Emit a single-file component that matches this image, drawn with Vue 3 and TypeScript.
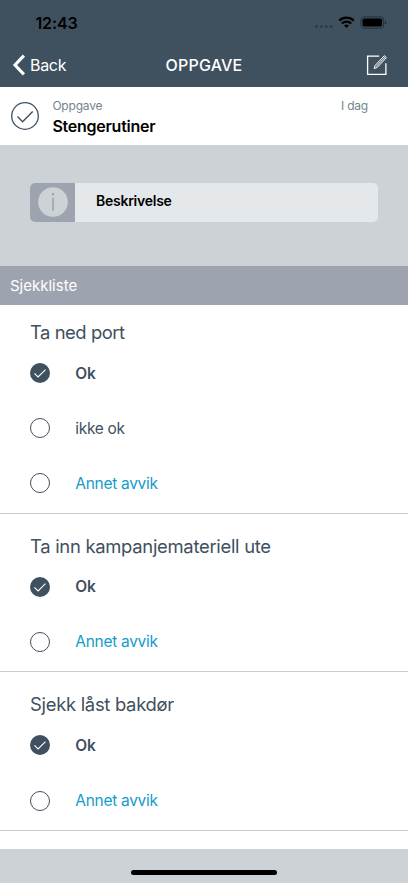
<script setup lang="ts">
type OptionKind = 'ok' | 'plain' | 'link'

interface Option {
  label: string
  kind: OptionKind
}

interface ChecklistItem {
  title: string
  options: Option[]
}

const items: ChecklistItem[] = [
  {
    title: 'Ta ned port',
    options: [
      { label: 'Ok', kind: 'ok' },
      { label: 'ikke ok', kind: 'plain' },
      { label: 'Annet avvik', kind: 'link' },
    ],
  },
  {
    title: 'Ta inn kampanjemateriell ute',
    options: [
      { label: 'Ok', kind: 'ok' },
      { label: 'Annet avvik', kind: 'link' },
    ],
  },
  {
    title: 'Sjekk låst bakdør',
    options: [
      { label: 'Ok', kind: 'ok' },
      { label: 'Annet avvik', kind: 'link' },
    ],
  },
]
</script>

<template>
  <div class="screen">
    <header class="top">
      <div class="status">
        <span class="clock">12:43</span>
        <svg class="signals" width="76" height="16" viewBox="0 0 76 16">
          <g fill="#2a3945">
            <circle cx="4.5" cy="11.7" r="1.4" />
            <circle cx="9.4" cy="11.7" r="1.4" />
            <circle cx="14.3" cy="11.7" r="1.4" />
            <circle cx="19.2" cy="11.7" r="1.4" />
          </g>
          <g fill="none" stroke="#000" stroke-width="2.2">
            <path d="M27.2 5.6 A10.6 10.6 0 0 1 41.8 5.6" />
            <path d="M29.8 8.5 A6.8 6.8 0 0 1 39.2 8.5" />
          </g>
          <path d="M32 10.6 A3.7 3.7 0 0 1 37 10.6 L34.5 13.1 Z" fill="#000" />
          <rect x="48.9" y="1.9" width="22.8" height="11.3" rx="3.2" fill="none" stroke="#1f2b34" stroke-width="0.9" />
          <rect x="50.5" y="3.5" width="19.6" height="8.1" rx="1.8" fill="#000" />
          <path d="M73 5.7 C74.6 6.4 74.6 8.7 73 9.4 Z" fill="#1f2b34" />
        </svg>
      </div>
      <div class="nav">
        <div class="back">
          <svg width="14" height="22" viewBox="0 0 14 22">
            <path d="M11.9 1.6 L3 11 L11.9 20.4" fill="none" stroke="#fff" stroke-width="3.1" />
          </svg>
          <span class="back-label">Back</span>
        </div>
        <h1 class="nav-title">OPPGAVE</h1>
        <svg class="edit" width="22" height="22" viewBox="0 0 22 22" fill="none" stroke="#fff">
          <path d="M13.2 2.1 H1.6 V20.4 H19.9 V9.2" stroke-width="1.3" />
          <path d="M8.2 14.6 L9.2 11.3 L18.3 1.7 L20.4 3.7 L11.4 13.3 Z M10 12.6 L19.3 2.8" stroke-width="1" stroke-linejoin="round" />
        </svg>
      </div>
    </header>

    <section class="task">
      <svg class="task-icon" width="30" height="30" viewBox="0 0 30 30" fill="none" stroke="#3f5060">
        <circle cx="15" cy="15" r="13.3" stroke-width="1.3" />
        <path d="M7.5 15.6 L12.6 20.7 L22.7 10.5" stroke-width="1.4" />
      </svg>
      <div class="task-text">
        <span class="task-kind">Oppgave</span>
        <span class="task-name">Stengerutiner</span>
      </div>
      <span class="task-date">I dag</span>
    </section>

    <section class="description">
      <div class="card">
        <div class="card-icon">
          <svg width="30" height="30" viewBox="0 0 30 30">
            <circle cx="15" cy="15" r="14.8" fill="#cdd2d6" />
            <circle cx="15" cy="7.2" r="1.2" fill="#9ea4af" />
            <rect x="14.2" y="10.7" width="1.6" height="13" fill="#9ea4af" />
          </svg>
        </div>
        <span class="card-label">Beskrivelse</span>
      </div>
    </section>

    <h2 class="list-header"><span>Sjekkliste</span></h2>

    <main class="list">
      <section v-for="item in items" :key="item.title" class="item">
        <h3 class="item-title"><span>{{ item.title }}</span></h3>
        <div v-for="option in item.options" :key="option.label" class="option">
          <svg class="radio" width="20" height="20" viewBox="0 0 20 20" fill="none">
            <template v-if="option.kind === 'ok'">
              <circle cx="10" cy="10" r="10" fill="#3f5060" />
              <path d="M4.4 10.4 L8.1 14 L15.5 6.6" stroke="#fff" stroke-width="1.1" />
            </template>
            <circle v-else cx="10" cy="10" r="9.5" stroke="#3f5060" stroke-width="1" />
          </svg>
          <span class="option-label" :class="option.kind">{{ option.label }}</span>
        </div>
      </section>
    </main>

    <footer class="bottom"><div class="home-bar"></div></footer>
  </div>
</template>

<style>
body {
  margin: 0;
}
</style>

<style scoped>
.screen {
  width: 408px;
  height: 883px;
  overflow: hidden;
  display: flex;
  flex-direction: column;
  background: #fff;
  color: #3f5060;
  font-family: Inter, "Liberation Sans", sans-serif;
}

svg {
  display: block;
  flex: none;
}

h1,
h2,
h3 {
  margin: 0;
  font-weight: 400;
}

.top {
  flex: none;
  height: 87px;
  background: #3f515f;
}

.status {
  height: 43.5px;
  display: flex;
  justify-content: space-between;
  padding: 0 20px 0 35.5px;
}

.clock {
  margin-top: 13px;
  line-height: 20px;
  font-size: 16px;
  font-weight: 600;
  letter-spacing: -0.15px;
  color: #000;
}

.signals {
  margin-top: 15px;
}

.nav {
  height: 43px;
  display: grid;
  grid-template-columns: 1fr auto 1fr;
  align-items: center;
  color: #fff;
}

.back {
  display: flex;
  align-items: center;
  gap: 4px;
  padding-left: 12px;
}

.back-label {
  font-size: 16px;
  letter-spacing: -0.3px;
}

.nav-title {
  font-size: 16px;
  font-weight: 500;
  letter-spacing: 0.2px;
}

.edit {
  justify-self: end;
  margin-right: 20px;
}

.task {
  flex: none;
  height: 58.4px;
  display: flex;
  padding: 0 40px 0 10px;
}

.task-icon {
  margin-top: 13.6px;
}

.task-text {
  flex: 1;
  display: flex;
  flex-direction: column;
  padding: 11px 0 0 12.4px;
}

.task-kind,
.task-date {
  font-size: 12px;
  line-height: 16px;
  letter-spacing: -0.2px;
  color: #74848d;
}

.task-name {
  margin-top: 2px;
  font-size: 16px;
  line-height: 20px;
  font-weight: 600;
  letter-spacing: -0.25px;
  color: #000;
}

.task-date {
  margin-top: 11px;
}

.description {
  flex: none;
  height: 83.6px;
  padding: 37.3px 30px 0;
  background: #cdd2d6;
}

.card {
  height: 39px;
  display: flex;
  border-radius: 5px;
  overflow: hidden;
  background: #e4e8eb;
}

.card-icon {
  width: 45px;
  display: flex;
  align-items: center;
  justify-content: center;
  background: #9ea4af;
}

.card-label {
  padding: 8.5px 0 0 21px;
  font-size: 14px;
  line-height: 20px;
  font-weight: 600;
  letter-spacing: -0.25px;
  color: #000;
}

.list-header {
  flex: none;
  height: 38.7px;
  display: flex;
  align-items: center;
  padding-left: 10px;
  background: #9ea4af;
  color: #fff;
  font-size: 15px;
  letter-spacing: 0;
}

.list {
  flex: 1;
  margin-top: -5px;
}

.item {
  padding: 0 0 1.7px 30px;
  border-bottom: 1px solid #c9cdd0;
}

.item-title {
  height: 45.7px;
  line-height: 64px;
  font-size: 18.4px;
  letter-spacing: -0.28px;
}

.item:first-child .item-title {
  letter-spacing: -0.45px;
}

.option {
  height: 55.1px;
  display: flex;
  align-items: center;
}

.option-label {
  padding-left: 25.3px;
  font-size: 15.5px;
  letter-spacing: -0.3px;
}

.option-label.ok {
  font-weight: 600;
}

.option-label.link {
  color: #159bc9;
}

.bottom {
  flex: none;
  height: 34px;
  display: flex;
  justify-content: center;
  background: #cdd2d6;
}

.home-bar {
  width: 146px;
  height: 5px;
  margin-top: 20.5px;
  border-radius: 3px;
  background: #000;
}
</style>
